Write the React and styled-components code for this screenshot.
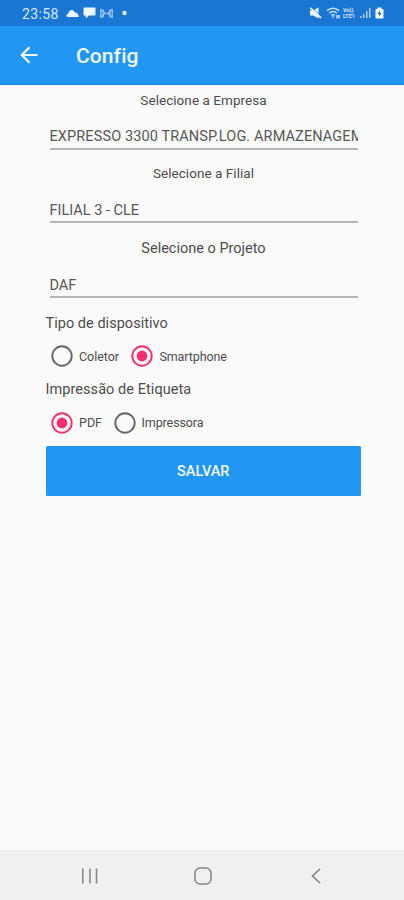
import React from "react";
import styled, { createGlobalStyle } from "styled-components";

const Global = createGlobalStyle`
  *, *::before, *::after { box-sizing: border-box; }
  body { margin: 0; background: #fafafa; font-family: Roboto, "Liberation Sans", sans-serif; }
  svg { display: block; flex: none; }
`;

const Screen = styled.div`
  display: flex;
  flex-direction: column;
  width: 404px;
  height: 900px;
  background: #fafafa;
  color: #4d4d4d;
  overflow: hidden;
`;

const StatusBar = styled.div`
  display: flex;
  align-items: center;
  justify-content: space-between;
  height: 26px;
  padding: 0 19px 0 22px;
  background: #1976d2;
  color: #d6eaff;
`;

const StatusGroup = styled.div`
  display: flex;
  align-items: center;
  gap: ${(p) => p.$gap}px;
`;

const Clock = styled.span`
  width: 38px;
  padding-top: 1px;
  font-size: 14px;
  letter-spacing: 0.35px;
  margin-right: 2px;
`;

const NetworkLabel = styled.span`
  display: flex;
  flex-direction: column;
  width: 14px;
  font-size: 5.5px;
  line-height: 6px;
  font-weight: 700;
`;

const AppBar = styled.header`
  display: flex;
  align-items: center;
  gap: 37px;
  height: 59px;
  padding: 0 20px;
  background: #2196f3;
  border-bottom: 1px solid #1483e0;
  color: #f2faff;
`;

const Title = styled.h1`
  margin: 0;
  padding-top: 1px;
  font-size: 21px;
  line-height: 28px;
  font-weight: 500;
  letter-spacing: 0.1px;
`;

const Form = styled.main`
  display: flex;
  flex-direction: column;
  flex: 1;
  padding: 0 43px 0 45.5px;
`;

const Field = styled.label`
  display: flex;
  flex-direction: column;
  margin: 0 3.5px ${(p) => p.$after}px 4px;
`;

const FieldLabel = styled.span`
  height: 32px;
  line-height: ${(p) => p.$line || 32}px;
  font-size: ${(p) => p.$size}px;
  letter-spacing: ${(p) => p.$spacing}px;
  text-align: center;
  white-space: nowrap;
`;

const FieldValue = styled.span`
  height: 33px;
  padding-top: ${(p) => p.$top || 9}px;
  line-height: 22px;
  font-size: 14.5px;
  letter-spacing: ${(p) => p.$spacing}px;
  color: #575757;
  border-bottom: 2px solid #b5b5b5;
  white-space: nowrap;
  overflow: hidden;
`;

const GroupTitle = styled.h2`
  margin: 0;
  height: 20px;
  line-height: 22px;
  font-size: 14.5px;
  font-weight: 400;
  letter-spacing: ${(p) => p.$spacing}px;
`;

const RadioRow = styled.div`
  display: flex;
  align-items: center;
  gap: ${(p) => p.$gap}px;
  height: ${(p) => p.$height}px;
  padding-left: 5.5px;
`;

const RadioOption = styled.div`
  display: flex;
  align-items: center;
  gap: 6px;
  font-size: 12.5px;
  letter-spacing: ${(p) => p.$spacing}px;
`;

const SaveButton = styled.button`
  height: 50px;
  padding: 1px 0 0;
  border: 0;
  border-radius: 1.5px;
  background: #2196f3;
  color: #f4faff;
  font: 500 14.5px/50px Roboto, sans-serif;
`;

const NavBar = styled.nav`
  display: flex;
  align-items: center;
  justify-content: space-between;
  height: 50px;
  padding: 2px 80px 0 78px;
  background: #f0f0f0;
`;

function Radio({ label, checked, spacing }) {
  const color = checked ? "#f52e72" : "#666";
  return (
    <RadioOption $spacing={spacing}>
      <svg width="22" height="22" viewBox="0 0 22 22">
        <circle cx="11" cy="11" r="9.7" fill="none" stroke={color} strokeWidth="1.9" />
        {checked && <circle cx="11" cy="11" r="5.4" fill={color} />}
      </svg>
      <span>{label}</span>
    </RadioOption>
  );
}

export default function App() {
  return (
    <>
      <Global />
      <Screen>
        <StatusBar>
          <StatusGroup $gap={4}>
            <Clock>23:58</Clock>
            <svg width="13" height="9" viewBox="0 0 13 9" fill="#f0f8ff">
              <path d="M2.2 8C-.2 8 0 5 2.3 4.8 2.8 2.2 3.9 1 5.7 1c1.7 0 2.6 1 3 2.4C11 3.2 12.7 5 12.7 8Z" />
            </svg>
            <svg width="13" height="12" viewBox="0 0 13 12" fill="#f0f8ff">
              <path d="M1.2.5h10.6q.7 0 .7.7v6.6q0 .7-.7.7H6L2.7 11.5V8.5H1.2q-.7 0-.7-.7V1.2q0-.7.7-.7Z" />
            </svg>
            <svg width="13" height="11" viewBox="0 0 13 11" fill="none" stroke="#c2defa">
              <path d="M.8 1v9M3 1.5v8M12.2 1v9M10 1.5v8M1 1.2l5.5 5 5.5-5M1 9.8l4.5-5M12 9.8l-4.5-5" />
            </svg>
            <svg width="16" height="6" viewBox="0 0 16 6" fill="#e6f3ff">
              <circle cx="7.5" cy="3" r="2.2" />
            </svg>
          </StatusGroup>
          <StatusGroup $gap={2}>
            <svg width="14" height="12" viewBox="0 0 14 12">
              <path d="M0 3.5h3l5.5-3v11L3.3 8.5H0Z" fill="#f0f8ff" />
              <path d="m1.3.2 10 9.4" stroke="#1976d2" strokeWidth="1" />
              <path d="m.3.8 10.7 10" stroke="#f0f8ff" strokeWidth="1.8" />
            </svg>
            <svg width="15" height="12" viewBox="0 0 15 12" fill="none" stroke="#c8e1f9" strokeWidth="1.5">
              <path d="M1 3.7q6-5 12 0M3.2 6.1q3.8-3 7.6 0M5.3 8.3q1.7-1.2 3.4 0" />
              <path d="m7 9.3.1 1.5M11 8v3.5M13 8v3.5" />
            </svg>
            <NetworkLabel>
              <span>Vo))</span>
              <span>LTE1</span>
            </NetworkLabel>
            <svg width="13" height="12" viewBox="0 0 13 12" fill="#a9cff4">
              <path d="M1 9h1.5v2H1ZM4 7h1.5v4H4ZM7 4h1.5v7H7ZM10 1h1.5v10H10Z" />
            </svg>
            <svg width="11" height="12" viewBox="0 0 11 12">
              <path d="M3.5.5h4V2h1.3q.7 0 .7.7v8q0 .7-.7.7H2.2q-.7 0-.7-.7v-8q0-.7.7-.7h1.3Z" fill="#f5faff" />
              <path d="M6.2 3.3 3.6 7h1.6l-.4 2.7L7.5 6H5.8Z" fill="#175da5" />
            </svg>
          </StatusGroup>
        </StatusBar>

        <AppBar>
          <svg width="19" height="18" viewBox="0 0 19 18" fill="none" stroke="#f2faff" strokeWidth="2.2">
            <path d="M17.5 9H2.5M9.5 1.3 1.8 9l7.7 7.7" />
          </svg>
          <Title>Config</Title>
        </AppBar>

        <Form>
          <Field $after={8}>
            <FieldLabel $size={13.5} $spacing={0.05} $line={31}>Selecione a Empresa</FieldLabel>
            <FieldValue $spacing={0.11}>EXPRESSO 3300 TRANSP.LOG. ARMAZENAGEM</FieldValue>
          </Field>
          <Field $after={10}>
            <FieldLabel $size={13.5} $spacing={0.05} $line={31}>Selecione a Filial</FieldLabel>
            <FieldValue $spacing={0} $top={10}>FILIAL 3 - CLE</FieldValue>
          </Field>
          <Field $after={15}>
            <FieldLabel $size={14.5} $spacing={0}>Selecione o Projeto</FieldLabel>
            <FieldValue $spacing={0} $top={10}>DAF</FieldValue>
          </Field>

          <GroupTitle $spacing={0.03}>Tipo de dispositivo</GroupTitle>
          <RadioRow $height={46} $gap={12.5}>
            <Radio label="Coletor" spacing={-0.05} />
            <Radio label="Smartphone" checked spacing={-0.1} />
          </RadioRow>
          <GroupTitle $spacing={0.06}>Impressão de Etiqueta</GroupTitle>
          <RadioRow $height={47} $gap={11.5}>
            <Radio label="PDF" checked spacing={0} />
            <Radio label="Impressora" spacing={-0.1} />
          </RadioRow>
          <SaveButton type="button">SALVAR</SaveButton>
        </Form>

        <NavBar>
          <svg width="24" height="18" viewBox="0 0 24 18" stroke="#858585" strokeWidth="1.5">
            <path d="M4.8 1.5v15M12 1.5v15M18.5 1.5v15" />
          </svg>
          <svg width="26" height="20" viewBox="0 0 26 20" fill="none" stroke="#858585" strokeWidth="1.5">
            <rect x="3" y="2" width="16" height="16" rx="5" />
          </svg>
          <svg width="16" height="18" viewBox="0 0 16 18" fill="none" stroke="#858585" strokeWidth="1.7">
            <path d="M12 2 4.5 9l7.5 7" />
          </svg>
        </NavBar>
      </Screen>
    </>
  );
}
